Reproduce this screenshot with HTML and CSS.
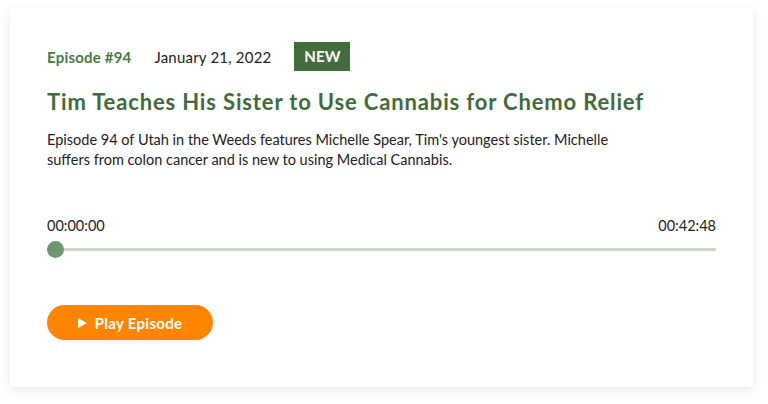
FILE: index.html
```html
<!DOCTYPE html>
<html lang="en">
<head>
  <meta charset="UTF-8">
  <title>Episode #94</title>
  <link rel="stylesheet" href="styles.css">
</head>
<body>

  <div class="card">
    <div class="meta">
      <span class="episode">Episode #94</span>
      <span class="date">January 21, 2022</span>
      <span class="badge">NEW</span>
    </div>

    <h2 class="title">Tim Teaches His Sister to Use Cannabis for Chemo Relief</h2>

    <p class="desc">Episode 94 of Utah in the Weeds features Michelle Spear, Tim's youngest sister. Michelle suffers from colon cancer and is new to using Medical Cannabis.</p>

    <div class="player">
      <div class="times">
        <span>00:00:00</span>
        <span>00:42:48</span>
      </div>
      <div class="track">
        <div class="thumb"></div>
      </div>
    </div>

    <button class="play">
      <svg width="9" height="10" viewBox="0 0 9 10"><path d="M0 0 L9 5 L0 10 Z" fill="#fff"/></svg>
      Play Episode
    </button>
  </div>

</body>
</html>
```

FILE: styles.css
```css
body {
  margin: 0;
  background: #fff;
  font-family: Lato, "Noto Sans", sans-serif;
  color: #222;
}
.card {
  margin: 8px 15px 16px 10px;
  width: 669px;
  height: 311px;
  padding: 34px 37px;
  background: #fff;
  box-shadow: 0 3px 10px rgba(0, 0, 0, 0.09);
}
.meta {
  display: flex;
  align-items: center;
  height: 29px;
  font-size: 15px;
  letter-spacing: 0.2px;
}
.episode {
  color: #4a7a43;
  font-weight: bold;
}
.date {
  margin-left: 23px;
  color: #222;
}
.badge {
  margin-left: 23px;
  background: #436c3c;
  color: #fff;
  font-weight: bold;
  width: 56px;
  text-align: center;
  height: 29px;
  line-height: 29px;
}
.title {
  margin: 16px 0 0;
  font-size: 22px;
  line-height: 30px;
  letter-spacing: 0.85px;
  color: #416c3a;
  font-weight: bold;
}
.desc {
  margin: 13px 0 0;
  max-width: 600px;
  font-size: 14.5px;
  line-height: 20px;
  color: #222;
}
.player {
  margin-top: 46px;
}
.times {
  display: flex;
  justify-content: space-between;
  font-size: 14.5px;
  line-height: 20px;
}
.track {
  position: relative;
  margin-top: 12px;
  height: 3px;
  background: #c6dac6;
}
.thumb {
  position: absolute;
  left: 0;
  top: -7px;
  width: 17px;
  height: 17px;
  border-radius: 50%;
  background: #6f9670;
}
.play {
  display: flex;
  align-items: center;
  justify-content: center;
  gap: 8px;
  margin-top: 54px;
  width: 166px;
  height: 35px;
  border: none;
  border-radius: 18px;
  background: #ff8500;
  color: #fff;
  font-family: Lato, "Noto Sans", sans-serif;
  font-size: 15px;
  font-weight: bold;
  letter-spacing: 0.3px;
  cursor: pointer;
}
```
